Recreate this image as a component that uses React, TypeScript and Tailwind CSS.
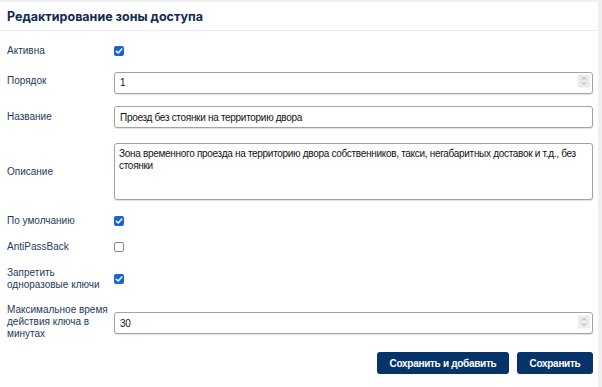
import React from 'react';

const labelCls = "w-[107px] shrink-0 text-[10px] leading-[12px] text-[#1e3a5c]";
const fieldFont = { fontFamily: '"Liberation Sans", Arial, sans-serif' };
const inputCls = "w-full h-[22px] border border-[#a3a3a3] rounded-[3px] bg-white px-[5px] text-[10px] tracking-[-0.3px] text-[#111] shadow-[0_1px_1px_rgba(0,0,0,0.12)] outline-none";

const Check = ({ on }: { on: boolean }) =>
    on ? (
        <span className="w-[10px] h-[10px] rounded-[2px] bg-[#1a62d8] flex items-center justify-center">
            <svg width="8" height="8" viewBox="0 0 8 8"><path d="M1.3 4.2 L3.2 6 L6.8 2" stroke="white" strokeWidth="1.5" fill="none" strokeLinecap="round" strokeLinejoin="round" /></svg>
        </span>
    ) : (
        <span className="w-[10px] h-[10px] rounded-[2px] border-[1.5px] border-[#8c8c8c] bg-white" />
    );

const Spinner = () => (
    <span className="absolute right-[3px] top-1/2 -translate-y-1/2 w-[12px] h-[13px] bg-[#ebebeb] rounded-[1px] flex flex-col items-center justify-center">
        <svg width="8" height="11" viewBox="0 0 8 11"><path d="M2 4 L4 2 L6 4 M2 7 L4 9 L6 7" stroke="#9a9a9a" strokeWidth="0.9" fill="none" /></svg>
    </span>
);

const Row = ({ label, className, children }: { label: React.ReactNode; className: string; children: React.ReactNode }) => (
    <div className={`flex items-center ${className}`}>
        <div className={labelCls} style={fieldFont}>{label}</div>
        <div className="flex-1 flex items-center">{children}</div>
    </div>
);

export default function App() {
    return (
        <div className="min-h-screen bg-[#eef0f2] pt-[2px] pr-[4px]" style={{ fontFamily: 'Inter, "Noto Sans", sans-serif' }}>
            <div className="bg-white h-[385px]">
                <div className="h-[29px] px-[7px] pt-[2px] border-b border-[#e9ebee] flex items-center">
                    <h1 className="text-[12.5px] font-bold text-[#0f2c50]">Редактирование зоны доступа</h1>
                </div>

                <div className="pl-[7px] pr-[5px]">
                    <Row label="Активна" className="mt-[9px] h-[22px]"><Check on /></Row>

                    <Row label="Порядок" className="mt-[8px] h-[22px]">
                        <div className="relative w-full">
                            <input className={inputCls} defaultValue="1" style={fieldFont} />
                            <Spinner />
                        </div>
                    </Row>

                    <Row label="Название" className="mt-[14px] h-[22px]">
                        <input className={inputCls} defaultValue="Проезд без стоянки на территорию двора" style={fieldFont} />
                    </Row>

                    <Row label="Описание" className="mt-[15px] h-[57px]">
                        <textarea
                            className="w-full h-[57px] border border-[#a3a3a3] rounded-[3px] bg-white px-[4px] py-[4px] text-[10px] leading-[12px] tracking-[-0.3px] text-[#111] shadow-[0_1px_1px_rgba(0,0,0,0.12)] outline-none resize-none"
                            style={fieldFont}
                            defaultValue="Зона временного проезда на территорию двора собственников, такси, негабаритных доставок и т.д., без стоянки"
                        />
                    </Row>

                    <Row label="По умолчанию" className="mt-[10px] h-[22px]"><Check on /></Row>
                    <Row label="AntiPassBack" className="mt-[4px] h-[22px]"><Check on={false} /></Row>
                    <Row label={<>Запретить<br />одноразовые ключи</>} className="mt-[9px] h-[23px]"><Check on /></Row>

                    <Row label="Максимальное время действия ключа в минутах" className="mt-[13px] h-[37px]">
                        <div className="relative w-full">
                            <input className={inputCls} defaultValue="30" style={fieldFont} />
                            <Spinner />
                        </div>
                    </Row>

                    <div className="mt-[12px] flex justify-end gap-[8px]" style={fieldFont}>
                        <button className="w-[132px] h-[22px] rounded-[3px] bg-[#06336a] text-white text-[10px] tracking-[-0.3px] font-bold">Сохранить и добавить</button>
                        <button className="w-[76px] h-[22px] rounded-[3px] bg-[#06336a] text-white text-[10px] tracking-[-0.3px] font-bold">Сохранить</button>
                    </div>
                </div>
            </div>
        </div>
    );
}
